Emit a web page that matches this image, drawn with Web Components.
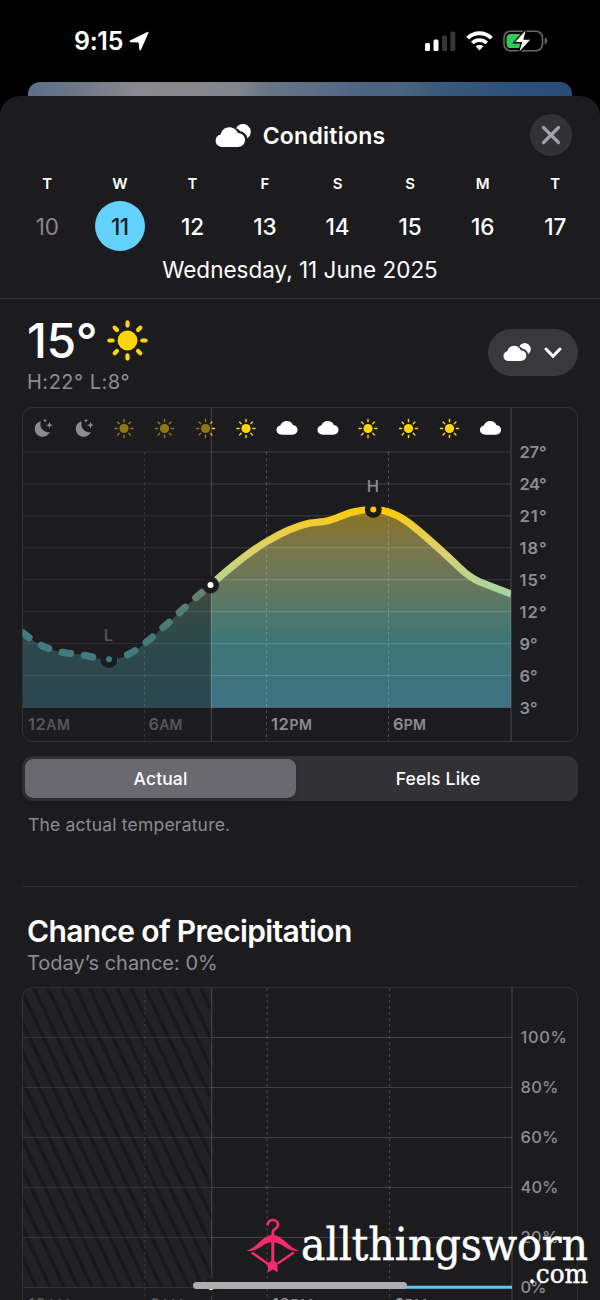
<!DOCTYPE html>
<html lang="en">
<head>
<meta charset="utf-8">
<title>Conditions</title>
<style>
  html, body { margin: 0; background: #000; }
  body { width: 600px; height: 1300px; overflow: hidden; position: relative; font-family: Inter, "Liberation Sans", sans-serif; color: #fff; }
</style>
</head>
<body>
<weather-screen></weather-screen>

<script>
// Shared glyphs, drawn on the same grid as the box they are shown in
const cloud = '<path d="M6.3 15.2C2.8 15.2 .4 13.2 .4 10.3 .4 7.9 1.9 6.1 4.2 5.7 5.2 2.8 7.7 .9 10.8 .9c3 0 5.3 1.7 6.3 4.2 2.8.1 4.8 2.2 4.8 5 0 2.9-2.2 5.1-5.2 5.1Z"/>';

const icons = {
    sun: `<svg viewBox="-20.5 -20.5 41 41"><g fill="#ffd60a"><circle r="9.9"/>${
        [0, 45, 90, 135, 180, 225, 270, 315].map(a => `<rect x="-2.1" y="-20.2" width="4.2" height="7.4" rx="2.1" transform="rotate(${a})"/>`).join('')
    }</g></svg>`,
    clouds: `<svg viewBox="0 0 36 24" fill="#fff">
        <path d="M21 4.2A7.8 7.8 0 1 1 32.3 14.2C31.7 10.5 28.9 7.7 25.2 7.3 24.3 5.8 22.8 4.8 21 4.2Z"/>
        <path d="M8 23C3.5 23 .6 20.4 .6 16.7c0-3.2 2-5.6 5-6.2C6.7 6.1 10 3.3 14.3 3.3c4 0 7.2 2.3 8.6 5.8 4.1.1 7.1 3 7.1 6.9 0 4.1-3 7-7.2 7Z"/></svg>`,
    close: '<svg viewBox="0 0 20 20" fill="none" stroke="#a2a1a8" stroke-width="3.2" stroke-linecap="round"><path d="M2.5 2.5l15 15M17.5 2.5l-15 15"/></svg>',
    chevron: '<svg viewBox="0 0 18 12" fill="none" stroke="#fff" stroke-width="3" stroke-linecap="round" stroke-linejoin="round"><path d="M2 2l7 7.3L16 2"/></svg>',
    arrow: '<svg viewBox="0 0 20 20"><path d="M18.400.9Q20 .2 19.400 1.900L12 18.800Q11.200 20.200 10.300 18.600L9.700 12.200Q9.700 11.400 8.900 11.400L1.500 11.200Q-.2 10.700 1 9.400Z" fill="#fff"/></svg>'
};

class StatusBar extends HTMLElement {
    constructor() {
        super();
        this.attachShadow({ mode: 'open' });
        this.shadowRoot.innerHTML = `
      <style>
        :host { display: flex; height: 82px; box-sizing: border-box; padding: 0 52px 0 74px; align-items: center; }
        svg { display: block; flex: none; }
        .time { font-size: 25px; font-weight: 600; letter-spacing: -.3px; line-height: 30px; }
        .arrow { width: 20px; height: 20px; margin-left: 6px; flex: 1; }
        .arrow svg { width: 20px; height: 20px; }
        .right { display: flex; gap: 10px; align-items: center; }
      </style>
      <span class="time">9:15</span>
      <span class="arrow">${icons.arrow}</span>
      <div class="right">
        <svg width="31" height="20" viewBox="0 0 31 20">
          <g fill="#fff"><rect x="0" y="12" width="5" height="8" rx="1.500"/><rect x="8.500" y="8.500" width="5" height="11.500" rx="1.500"/></g>
          <g fill="#363636"><rect x="17" y="4.500" width="5" height="15.500" rx="1.500"/><rect x="25.300" y=".5" width="5" height="19.500" rx="1.500"/></g>
        </svg>
        <svg width="27" height="20" viewBox="0 0 27 20">
          <g fill="none" stroke="#fff" stroke-width="3.800"><path d="M1.600 7.200C8.200.6 18.800.6 25.400 7.200"/><path d="M6.300 12c4-3.900 10.400-3.900 14.400 0"/></g>
          <path d="M9.600 15.300c2.300-1.900 5.500-1.900 7.800 0L13.500 19.400Z" fill="#fff"/>
        </svg>
        <svg width="45" height="22" viewBox="0 0 45 22">
          <rect x="1" y="1.200" width="38.500" height="19.600" rx="6.500" fill="none" stroke="#69696b" stroke-width="1.600"/>
          <path d="M41.700 7.600c1.700.6 2.600 1.800 2.600 3.400s-.9 2.800-2.600 3.400Z" fill="#69696b"/>
          <path d="M7.500 3.900H17V18.100H7.500A4 4 0 0 1 3.500 14V8A4 4 0 0 1 7.500 3.900Z" fill="#34c759"/>
          <path d="M22.600.4 12.200 12.100h7L16.400 21.600 27.100 9.700h-6.800Z" fill="#fff" stroke="#000" stroke-width="2.600" paint-order="stroke"/>
        </svg>
      </div>`;
    }
}

class DayStrip extends HTMLElement {
    constructor() {
        super();
        this.attachShadow({ mode: 'open' });
        const days = [['T', 10], ['W', 11], ['T', 12], ['F', 13], ['S', 14], ['S', 15], ['M', 16], ['T', 17]];
        this.shadowRoot.innerHTML = `
      <style>
        :host { display: grid; grid-template-columns: repeat(8, 72.570px); margin-left: 11px; }
        .day { display: flex; flex-direction: column; align-items: center; }
        .name { font-size: 15px; font-weight: 600; line-height: 18px; }
        .num { width: 50px; height: 50px; margin-top: 8px; border-radius: 50%; line-height: 51px; text-align: center; font-size: 22.500px; font-weight: 450; letter-spacing: -.1px; }
        .past .num { color: #87868c; font-weight: 400; }
        .on .num { background: #64d2ff; color: #1c1c1e; font-weight: 500; letter-spacing: -.5px; }
      </style>
      ${days.map(([name, num], i) => `<div class="day ${i === 0 ? 'past' : i === 1 ? 'on' : ''}"><span class="name">${name}</span><span class="num">${num}</span></div>`).join('')}`;
    }
}

class TemperatureChart extends HTMLElement {
    constructor() {
        super();
        this.attachShadow({ mode: 'open' });
        const curve = 'M22 632C28 637 36 643 45 647C52 650 58 652 66.500 653C76 653.800 80 654.500 88 656C96 657.500 101 660 109 660C119 660 124 656.500 131 653C138 649 143 645 149 640C155 635 160 630 166 625C172 620 177 615 182.500 609.500C188 605 193 600 199 595L210.500 585C222 575 244 555 266 542C280 533.500 296 526 310 523C318 522 323 522 329 520.500C340 518 349 509.500 373 509.500C384 509.500 397 514 409 523C421 532 443 552 460 568C468 576 473 579 480 582L511 594';
        const hours = [43, 84, 124, 164.500, 205.500, 246, 287, 328, 368, 408.500, 449.500, 490.500];
        const kinds = ['m', 'm', 's', 's', 's', 's', 'c', 'c', 's', 's', 's', 'c'];
        const glyph = (kind, x) => {
            if (kind === 'm') {
                return `<g transform="translate(${x} 428)" fill="#8d8d8f"><path d="M-2.200-6.800A7.900 7.900 0 1 0 6.800 4.200 8.300 8.300 0 0 1-2.200-6.800Z"/><path d="M2-9.500l.6 1.500 1.500.6-1.500.6L2-5.300 1.400-6.800-.1-7.400 1.400-8ZM6.500-6.300l.9 2.600 2.600.9-2.600.9L6.500.7 5.600-1.900 3-2.800l2.600-.9Z"/></g>`;
            }
            if (kind === 'c') {
                return `<g transform="translate(${x - 10.900} 420.200)" fill="#fff"><g transform="scale(.98 .95)">${cloud}</g></g>`;
            }
            return `<g transform="translate(${x} 428.500)" fill="#ffd60a"><circle r="4.600"/>${
                [0, 45, 90, 135, 180, 225, 270, 315].map(a => `<rect x="-.7" y="-9.700" width="1.400" height="3.500" rx=".6" transform="rotate(${a})"/>`).join('')
            }</g>`;
        };
        const rows = [27, 24, 21, 18, 15, 12, 9, 6, 3].map((t, i) => ({ t, y: 452 + i * 31.940 }));
        this.shadowRoot.innerHTML = `
      <style>
        :host { display: block; }
        svg { display: block; }
        .axis { font-size: 16.500px; font-weight: 600; fill: #8d8c93; }
        .light { font-weight: 450; }
        .dim { fill: #56565a; }
      </style>
      <svg width="558" height="337" viewBox="21 406 558 337">
        <defs>
          <linearGradient id="line" gradientUnits="userSpaceOnUse" x1="0" y1="509" x2="0" y2="660">
            <stop offset="0" stop-color="#ffcb06"/><stop offset=".12" stop-color="#efcd3c"/><stop offset=".28" stop-color="#ddd16a"/>
            <stop offset=".47" stop-color="#b8d591"/><stop offset=".57" stop-color="#a2d6a6"/><stop offset="1" stop-color="#60c6bd"/>
          </linearGradient>
          <linearGradient id="past" gradientUnits="userSpaceOnUse" x1="0" y1="580" x2="0" y2="660">
            <stop offset="0" stop-color="#6c8568"/><stop offset=".35" stop-color="#597e70"/><stop offset=".65" stop-color="#447b7a"/><stop offset="1" stop-color="#417a80"/>
          </linearGradient>
          <linearGradient id="fill" gradientUnits="userSpaceOnUse" x1="0" y1="509" x2="0" y2="707">
            <stop offset="0" stop-color="#8b731c"/><stop offset=".17" stop-color="#7c7647"/><stop offset=".38" stop-color="#68785d"/>
            <stop offset=".52" stop-color="#51786b"/><stop offset=".64" stop-color="#3f7674"/><stop offset="1" stop-color="#3e7284"/>
          </linearGradient>
          <clipPath id="before"><rect x="22.500" y="407" width="189" height="334"/></clipPath>
          <clipPath id="after"><rect x="211" y="407" width="300" height="334"/></clipPath>
        </defs>

        <path d="${curve}V707.500H22.500Z" fill="url(#fill)" clip-path="url(#after)"/>
        <path d="${curve}V707.500H22.500Z" fill="url(#fill)" opacity=".5" clip-path="url(#before)"/>

        <g stroke="#fff" stroke-opacity=".16">
          ${rows.map(r => `<path d="M211 ${r.y}H511"/><path d="M22 ${r.y}H211" stroke-opacity=".09"/>`).join('')}
          <path d="M144.500 452V741" stroke-opacity=".11" stroke-dasharray="3 3"/>
          <path d="M266.500 452V741M388.500 452V741" stroke-opacity=".2" stroke-dasharray="3 3"/>
          <path d="M511 407V741M211.300 407V741" stroke-opacity=".2"/>
        </g>
        <rect x="22.500" y="407.500" width="555" height="334" rx="10" fill="none" stroke="#323234"/>

        <g opacity=".5" clip-path="url(#before)">${glyph('s', 124)}${glyph('s', 164.500)}${glyph('s', 205.500)}</g>
        ${glyph('m', 43)}${glyph('m', 84)}
        <g clip-path="url(#after)">${hours.map((x, i) => kinds[i] === 'm' ? '' : glyph(kinds[i], x)).join('')}</g>

        <g fill="none" stroke-width="7.200">
          <path d="${curve}" stroke="url(#line)" clip-path="url(#after)"/>
          <path d="${curve}" stroke="url(#past)" stroke-linecap="round" stroke-dasharray="8 14.300" stroke-dashoffset="21.100" clip-path="url(#before)"/>
        </g>
        <g fill="#1c1c1e">
          <circle cx="210.500" cy="585" r="8.500"/><circle cx="373.300" cy="509.500" r="8.500"/><circle cx="109" cy="659.500" r="8.500"/>
        </g>
        <circle cx="210.500" cy="585" r="3" fill="#fff"/>
        <circle cx="373.300" cy="509.500" r="3" fill="#ffc907"/>
        <circle cx="109" cy="659.300" r="3" fill="#41797d"/>

        <g class="axis">
          ${rows.map(r => `<text x="519.500" y="${r.y + 6}" textLength="${r.t > 9 ? 27 : 18}">${r.t}°</text>`).join('')}
          <text x="373" y="491.500" text-anchor="middle" class="light">H</text>
          <text x="108.500" y="641" text-anchor="middle" class="light dim">L</text>
          <text x="28" y="730" textLength="42" class="dim">12<tspan font-size="14">AM</tspan></text>
          <text x="148.500" y="730" textLength="34" class="dim">6<tspan font-size="14">AM</tspan></text>
          <text x="271" y="730" textLength="41">12<tspan font-size="14">PM</tspan></text>
          <text x="393" y="730" textLength="33">6<tspan font-size="14">PM</tspan></text>
        </g>
      </svg>`;
    }
}

class RainChart extends HTMLElement {
    constructor() {
        super();
        this.attachShadow({ mode: 'open' });
        const rows = [100, 80, 60, 40, 20, 0].map((p, i) => ({ p, y: 1037.500 + i * 50 }));
        this.shadowRoot.innerHTML = `
      <style>
        :host { display: block; }
        svg { display: block; }
        .axis { font-size: 16.500px; font-weight: 550; fill: #8d8c93; }
        .dim { fill: #56565a; }
      </style>
      <svg width="558" height="350" viewBox="21 987 558 350">
        <defs>
          <pattern id="hatch" width="13.900" height="20" patternUnits="userSpaceOnUse" patternTransform="translate(32 988) skewX(25.300)">
            <rect width="13.900" height="20" fill="#222224"/><rect width="4" height="20" fill="#19191b"/>
          </pattern>
        </defs>
        <path d="M22.500 1287V998a10 10 0 0 1 10-10H212V1287Z" fill="url(#hatch)"/>
        <g stroke="#fff" stroke-opacity=".16">
          ${rows.map(r => `<path d="M212 ${r.y}H512"/><path d="M22 ${r.y}H212" stroke-opacity=".09"/>`).join('')}
          <path d="M144.800 988V1330" stroke-opacity=".1" stroke-dasharray="3 3"/>
          <path d="M267.200 988V1330M389.600 988V1330" stroke-opacity=".2" stroke-dasharray="3 3"/>
          <path d="M512 988V1330M211.800 988V1330" stroke-opacity=".2"/>
        </g>
        <rect x="22.500" y="987.700" width="555" height="340" rx="10" fill="none" stroke="#303032"/>
        <path d="M212 1287.300H512" stroke="#5ac8fa" stroke-width="3"/>
        <circle cx="211" cy="1287" r="8.500" fill="#1c1c1e"/>
        <circle cx="211" cy="1287" r="3" fill="#fff"/>
        <g class="axis">
          ${rows.map(r => `<text x="520.500" y="${r.y + 5.500}" textLength="${r.p > 99 ? 46.500 : r.p > 9 ? 38 : 26}">${r.p}%</text>`).join('')}
          <text x="28" y="1310" textLength="42" class="dim">12<tspan font-size="14">AM</tspan></text>
          <text x="149.500" y="1310" textLength="34" class="dim">6<tspan font-size="14">AM</tspan></text>
          <text x="272" y="1310" textLength="41">12<tspan font-size="14">PM</tspan></text>
          <text x="394" y="1310" textLength="33">6<tspan font-size="14">PM</tspan></text>
        </g>
      </svg>`;
    }
}

class SegmentedControl extends HTMLElement {
    constructor() {
        super();
        this.attachShadow({ mode: 'open' });
        this.shadowRoot.innerHTML = `
      <style>
        :host { display: grid; grid-template-columns: 271px 1fr; height: 45px; padding: 3px; box-sizing: border-box; border-radius: 11px; background: #323135; font-size: 17.500px; font-weight: 500; text-align: center; line-height: 39px; }
        .on { background: #6a696f; border-radius: 8.500px; box-shadow: 0 2px 6px rgba(0, 0, 0, .15); letter-spacing: .1px; }
        .off { padding-left: 5px; font-weight: 450; letter-spacing: .2px; }
      </style>
      <div class="on"><slot name="first"></slot></div>
      <div class="off"><slot name="second"></slot></div>`;
    }
}

// Site mark laid over the bottom right corner
class SiteMark extends HTMLElement {
    constructor() {
        super();
        this.attachShadow({ mode: 'open' });
        this.shadowRoot.innerHTML = `
      <style>
        :host { display: block; position: absolute; left: 240px; top: 1210px; width: 360px; height: 90px; }
        svg { display: block; }
        text { font-family: "DejaVu Serif", serif; fill: #fff; stroke: #fff; stroke-width: .5px; }
      </style>
      <svg width="360" height="90" viewBox="240 1210 360 90">
        <g fill="none" stroke="#f72b6b">
          <path d="M267.700 1225.500C267.500 1221.800 269.800 1220 272.700 1220C276 1220 278 1222.200 278 1225C278 1229 272.800 1228.800 272.800 1232V1236" stroke-width="2.700"/>
          <path d="M272.800 1242V1264" stroke-width="3"/>
          <path d="M252.500 1253L268 1264M293 1253L278.500 1263" stroke-width="2.500" stroke-linecap="round"/>
        </g>
        <path d="M246.500 1250.500C257 1248.500 262.500 1235 272.700 1235C283 1235 289 1248.500 299 1250.500C289 1253.500 282 1242 272.700 1242C263 1242 257 1253.500 246.500 1250.500Z" fill="#f72b6b"/>
        <path d="M272.800 1260l4.700 3V1272.200l-4.600-2.700-4.900 2.700V1263Z" fill="#f72b6b"/>
        <text x="301" y="1260" font-size="44" textLength="287" lengthAdjust="spacingAndGlyphs">allthingsworn</text>
        <text x="528" y="1282.500" font-size="26" textLength="60" lengthAdjust="spacingAndGlyphs">.com</text>
      </svg>`;
    }
}

class WeatherScreen extends HTMLElement {
    constructor() {
        super();
        this.attachShadow({ mode: 'open' });
        this.shadowRoot.innerHTML = `
      <style>
        :host { display: block; }
        svg { display: block; }
        .peek { height: 14px; margin: 0 28px; border-radius: 12px 12px 0 0; background: linear-gradient(90deg, #5c6f88 0%, #6d7787 9%, #8a8991 20%, #88888f 31%, #7e848e 39%, #677586 44%, #5e6f85 52%, #4b6482 62%, #4b667e 68%, #39597b 76%, #2c507a 90%, #284b76 100%); }
        .sheet { height: 1204px; overflow: hidden; border-radius: 20px 20px 0 0; background: #1c1c1e; }
        header { height: 202px; border-bottom: 1px solid #313133; }
        .bar { display: grid; grid-template-columns: 1fr auto 1fr; align-items: center; height: 42px; padding: 18px 28px 0; }
        .title { grid-column: 2; display: flex; align-items: center; gap: 12px; padding-top: 1px; font-size: 23px; font-weight: 600; letter-spacing: .25px; }
        .title svg { width: 36px; height: 24px; }
        .close { justify-self: end; width: 42px; height: 42px; border-radius: 50%; background: #323135; display: grid; place-items: center; }
        .close svg { width: 20px; height: 20px; }
        day-strip { margin-top: 19px; }
        .date { text-align: center; font-size: 22.500px; line-height: 28px; margin-top: 5px; }
        .now { display: flex; justify-content: space-between; padding: 16px 22px 0 27px; height: 91px; }
        .temp { display: flex; align-items: center; gap: 10px; height: 50px; font-size: 48px; font-weight: 500; letter-spacing: -.4px; }
        .temp svg { width: 41px; height: 41px; }
        .range { margin-top: 4px; font-size: 20px; line-height: 26px; color: #8d8c93; letter-spacing: .5px; }
        .pick { display: flex; align-items: center; gap: 13px; width: 90px; height: 47px; margin-top: 14px; border-radius: 24px; background: #39383d; padding-left: 15px; box-sizing: border-box; }
        .pick svg:first-child { width: 28px; height: 19px; }
        .pick svg:last-child { width: 18px; height: 12px; }
        temperature-chart, rain-chart { margin-left: 21px; }
        segmented-control { margin: 13px 22px 0; }
        .note { margin: 12px 28px 0; font-size: 17.500px; line-height: 24px; color: #8d8c93; letter-spacing: .2px; }
        hr { margin: 49px 22px 0; border: 0; height: 1px; background: #2f2f31; }
        h2 { margin: 26px 27px 0; font-size: 30px; line-height: 36px; font-weight: 600; letter-spacing: -.65px; }
        .sub { margin: 0 27px; font-size: 20px; line-height: 28px; color: #8d8c93; height: 38px; }
        .home { position: absolute; left: 193px; top: 1282px; width: 214px; height: 7px; border-radius: 4px; background: #aeaeae; }
      </style>
      <status-bar></status-bar>
      <div class="peek"></div>
      <div class="sheet">
        <header>
          <div class="bar">
            <div class="title">${icons.clouds}<span>Conditions</span></div>
            <div class="close">${icons.close}</div>
          </div>
          <day-strip></day-strip>
          <div class="date"><span>Wednesday, 11 June 2025</span></div>
        </header>
        <div class="now">
          <div>
            <div class="temp"><span>15°</span>${icons.sun}</div>
            <div class="range">H:22° L:8°</div>
          </div>
          <div class="pick">${icons.clouds}${icons.chevron}</div>
        </div>
        <temperature-chart></temperature-chart>
        <segmented-control><span slot="first">Actual</span><span slot="second">Feels Like</span></segmented-control>
        <div class="note">The actual temperature.</div>
        <hr>
        <h2>Chance of Precipitation</h2>
        <div class="sub">Today’s chance: 0%</div>
        <rain-chart></rain-chart>
      </div>
      <div class="home"></div>
      <site-mark></site-mark>`;
    }
}

customElements.define('status-bar', StatusBar);
customElements.define('day-strip', DayStrip);
customElements.define('temperature-chart', TemperatureChart);
customElements.define('rain-chart', RainChart);
customElements.define('segmented-control', SegmentedControl);
customElements.define('site-mark', SiteMark);
customElements.define('weather-screen', WeatherScreen);
</script>
</body>
</html>
